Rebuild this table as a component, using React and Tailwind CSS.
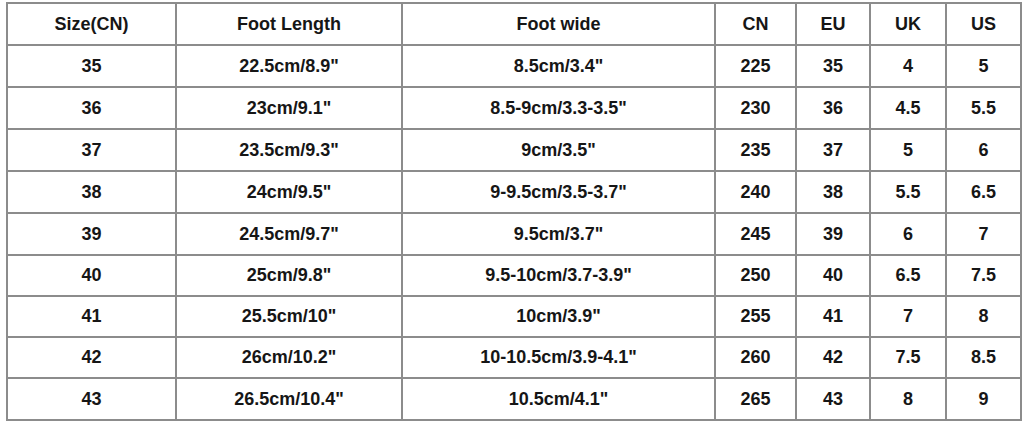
import React from 'react';

const headers = ['Size(CN)', 'Foot Length', 'Foot wide', 'CN', 'EU', 'UK', 'US'];

const rows = [
  ['35', '22.5cm/8.9"', '8.5cm/3.4"', '225', '35', '4', '5'],
  ['36', '23cm/9.1"', '8.5-9cm/3.3-3.5"', '230', '36', '4.5', '5.5'],
  ['37', '23.5cm/9.3"', '9cm/3.5"', '235', '37', '5', '6'],
  ['38', '24cm/9.5"', '9-9.5cm/3.5-3.7"', '240', '38', '5.5', '6.5'],
  ['39', '24.5cm/9.7"', '9.5cm/3.7"', '245', '39', '6', '7'],
  ['40', '25cm/9.8"', '9.5-10cm/3.7-3.9"', '250', '40', '6.5', '7.5'],
  ['41', '25.5cm/10"', '10cm/3.9"', '255', '41', '7', '8'],
  ['42', '26cm/10.2"', '10-10.5cm/3.9-4.1"', '260', '42', '7.5', '8.5'],
  ['43', '26.5cm/10.4"', '10.5cm/4.1"', '265', '43', '8', '9'],
];

const Row = ({ cells, tall }) => (
  <div
    className={`grid grid-cols-[169px_226px_313px_81px_74px_76px_75px] ${
      tall ? 'h-[42px]' : 'h-[41px]'
    }`}
  >
    {cells.map((c, i) => (
      <div
        key={i}
        className="flex items-center justify-center border-r-2 border-b-2 border-[#8c8c8c] text-[18px] font-bold text-[#161616]"
      >
        {c}
      </div>
    ))}
  </div>
);

const App = () => {
  return (
    <div className="w-[1023px] h-[425px] bg-white overflow-hidden pt-[2px] pl-[6px] font-['Liberation_Sans',Arial,sans-serif]">
      <div className="w-fit border-l-2 border-t-2 border-[#8c8c8c]">
        <Row cells={headers} tall />
        {rows.map((r, i) => (
          <Row key={i} cells={r} tall={i < 5 || i === 8} />
        ))}
      </div>
    </div>
  );
};

export default App;
